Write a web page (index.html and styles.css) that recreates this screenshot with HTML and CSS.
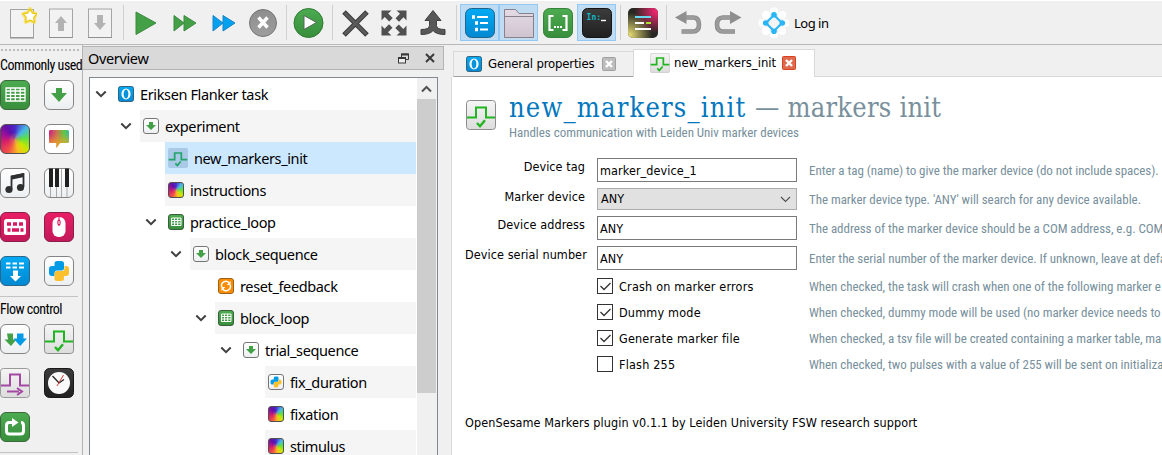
FILE: index.html
```html
<!DOCTYPE html>
<html lang="en">
<head>
<meta charset="utf-8">
<title>OpenSesame</title>
<link rel="stylesheet" href="styles.css">
</head>
<body>
<svg class="defs" width="0" height="0" aria-hidden="true">
  <defs>
    <linearGradient id="gGreen" x1="0" y1="0" x2="0" y2="1"><stop offset="0" stop-color="#4cab50"/><stop offset="1" stop-color="#388e3c"/></linearGradient>
    <linearGradient id="gBlue" x1="0" y1="0" x2="0" y2="1"><stop offset="0" stop-color="#03a9f4"/><stop offset="1" stop-color="#0288d1"/></linearGradient>
    <linearGradient id="gWhite" x1="0" y1="0" x2="0" y2="1"><stop offset="0" stop-color="#ffffff"/><stop offset="1" stop-color="#eceff1"/></linearGradient>
    <linearGradient id="gGrey" x1="0" y1="0" x2="0" y2="1"><stop offset="0" stop-color="#f5f5f5"/><stop offset="1" stop-color="#dcdcdc"/></linearGradient>
    <linearGradient id="gPink" x1="0" y1="0" x2="0" y2="1"><stop offset="0" stop-color="#e91e63"/><stop offset="1" stop-color="#c2185b"/></linearGradient>
    <linearGradient id="gDark" x1="0" y1="0" x2="0" y2="1"><stop offset="0" stop-color="#3c3c3c"/><stop offset="1" stop-color="#202020"/></linearGradient>
    <linearGradient id="gMid" x1="0" y1="0" x2="0" y2="1"><stop offset="0" stop-color="#8e8e8e"/><stop offset="1" stop-color="#9e9e9e"/></linearGradient>
    <linearGradient id="gFolder" x1="0" y1="0" x2="0" y2="1"><stop offset="0" stop-color="#e4dbe5"/><stop offset="1" stop-color="#cfc3d0"/></linearGradient>
    <radialGradient id="gRose" cx=".95" cy=".1" r=".75"><stop offset="0" stop-color="#f92672"/><stop offset="1" stop-color="#f92672" stop-opacity="0"/></radialGradient>
    <radialGradient id="gSand" cx=".05" cy=".9" r=".75"><stop offset="0" stop-color="#e6db74"/><stop offset="1" stop-color="#e6db74" stop-opacity="0"/></radialGradient>
  </defs>
  <symbol id="doc" viewBox="0 0 30 30"><rect x="3.5" y="1" width="23" height="28.5" fill="#f3f3f3" stroke="#a5a5a5"/><path d="M3 29.7h24" stroke="#8c8c8c"/></symbol>
  <symbol id="loop" viewBox="0 0 30 30"><rect x=".5" y=".5" width="29" height="29" rx="5.5" fill="url(#gGreen)" stroke="#3a6a3c"/><path d="M6 8h19v13H6zM6 11h19M6 14.3h19M6 17.6h19M10.5 8v13M15.3 8v13M20.2 8v13" fill="none" stroke="#fff" stroke-width="1.3"/></symbol>
  <symbol id="loopS" viewBox="0 0 16 16"><rect x=".5" y=".5" width="15" height="15" rx="2.5" fill="url(#gGreen)" stroke="#3a5f3c"/><path d="M3.5 4h9.500v7.500H3.500zM3.500 6.500h9.500M3.500 9h9.500M6.500 4v7.500M9.700 4v7.500" fill="none" stroke="#fff" stroke-width="1"/></symbol>
  <symbol id="seq" viewBox="0 0 30 30"><rect x=".5" y=".5" width="29" height="29" rx="5.5" fill="url(#gWhite)" stroke="#858585"/><path d="M12 8h6v5h5l-8 9-8-9h5z" fill="#43a047"/></symbol>
  <symbol id="seqS" viewBox="0 0 16 16"><rect x=".5" y=".5" width="15" height="15" rx="2.500" fill="url(#gWhite)" stroke="#757575"/><path d="M6 4h4v3h3l-5 5-5-5h3z" fill="#43a047"/></symbol>
  <symbol id="markers" viewBox="0 0 30 30"><rect x=".5" y=".5" width="29" height="29" rx="3" fill="url(#gGrey)" stroke="#8d8d8d"/><path d="M1 17.500h9V7.500h10v10h9" fill="none" stroke="#21b521" stroke-width="2"/><path d="M11 23l3 3.200 5-6" fill="none" stroke="#21b521" stroke-width="2.400"/></symbol>
  <symbol id="markersTab" viewBox="0 0 30 30"><rect x=".5" y=".5" width="29" height="29" rx="3" fill="url(#gGrey)" stroke="#c4c4c4"/><path d="M1 17.500h9V7.500h10v10h9M11 23l3 3.200 5-6" fill="none" stroke="#21b521" stroke-width="2.600"/></symbol>
  <symbol id="markersSel" viewBox="0 0 30 30"><rect width="30" height="30" rx="3" fill="#a9c9e6"/><path d="M1 17.500h9V7.500h10v10h9M11 23l3 3.200 5-6" fill="none" stroke="#21a56a" stroke-width="2.600"/></symbol>
  <symbol id="pulse" viewBox="0 0 30 30"><rect x=".5" y=".5" width="29" height="29" rx="3" fill="url(#gGrey)" stroke="#9a9a9a"/><path d="M1 17.500h9V6.500h10v11h9" fill="none" stroke="#a349a4" stroke-width="2"/><path d="M7 23.500h12M17 20l5 3.500-5 3.500" fill="none" stroke="#a349a4" stroke-width="2"/></symbol>
  <symbol id="python" viewBox="0 0 30 30"><rect x=".5" y=".5" width="29" height="29" rx="5.500" fill="url(#gWhite)" stroke="#858585"/><path d="M10.500 9V7.500Q10.500 5 13 5h4q3 0 3 2.500V12q0 2.500-2.500 2.500H13q-2.500 0-2.500 3V20H8q-3 0-3-3v-4q0-3 3-3h2.500z" fill="#039be5"/><path d="M20.500 10H22q3 0 3 3v4q0 3-3 3h-2v2.500q0 2.500-3 2.500h-4q-2.500 0-2.500-2.500v-5q0-2.500 2.500-2.500h5q2.500 0 2.500-2.500z" fill="#fbc02d"/></symbol>
  <symbol id="pythonS" viewBox="0 0 16 16"><rect x=".5" y=".5" width="15" height="15" rx="2.500" fill="url(#gWhite)" stroke="#757575"/><g transform="translate(.5 .5) scale(.5)"><path d="M10.500 9V7.500Q10.500 4 13 4h4q3 0 3 2.500V12q0 2.500-2.500 2.500H13q-2.500 0-2.500 3V20H8q-4 0-4-3v-4q0-3 4-3h2.500z" fill="#039be5"/><path d="M20.500 10H22q4 0 4 3v4q0 3-4 3h-2v2.500q0 3.500-3 3.500h-4q-2.500 0-2.500-3.500v-5q0-2.500 2.500-2.500h5q2.500 0 2.500-2.500z" fill="#fbc02d"/></g></symbol>
  <symbol id="general" viewBox="0 0 16 16"><rect x=".5" y=".5" width="15" height="15" rx="2" fill="url(#gBlue)" stroke="#31637e"/><ellipse cx="8" cy="8" rx="3.500" ry="4.500" fill="none" stroke="#fff" stroke-width="2.200"/><ellipse cx="8" cy="8" rx="2" ry="4.600" fill="#0593dc"/></symbol>
  <symbol id="reset" viewBox="0 0 16 16"><rect x=".5" y=".5" width="15" height="15" rx="2.500" fill="#fb8c00" stroke="#9b6017"/><path d="M3.800 9a4.300 4.300 0 0 1 7.300-4.200M12.200 7a4.300 4.300 0 0 1-7.300 4.200" fill="none" stroke="#fff" stroke-width="1.500"/><path d="M12.500 3v4H8.700zM3.500 13V9h3.800z" fill="#fff"/></symbol>
  <symbol id="arrow" viewBox="0 0 12 8"><path d="M1.300 1.500L6 6.200l4.700-4.700" fill="none" stroke="#404040" stroke-width="2"/></symbol>
</svg>

<header class="toolbar">
  <span class="tool"><svg width="30" height="36" viewBox="0 0 30 36"><rect x="3.500" y="4.500" width="23" height="28" fill="#f3f3f3" stroke="#a3a3a3"/><path d="M3 33h24" stroke="#8e8e8e"/><path d="M23 4l2.400 4 4.400.9-3 3.500.4 4.600-4.200-1.800-4.200 1.800.4-4.600-3-3.500 4.400-.9z" fill="#fff" stroke="#f7e04a" stroke-width="4" stroke-linejoin="round" opacity=".7"/><path d="M23 4l2.400 4 4.400.9-3 3.500.4 4.600-4.200-1.800-4.200 1.800.4-4.600-3-3.500 4.400-.9z" fill="#fff" stroke="#ecc90f" stroke-width="1.300" stroke-linejoin="round"/></svg></span>
  <span class="tool"><svg width="30" height="30"><use href="#doc"/><path d="M12 23v-8H9l6-7 6 7h-3v8z" fill="#b3b3b3"/></svg></span>
  <span class="tool"><svg width="30" height="30"><use href="#doc"/><path d="M12 7v8H9l6 7 6-7h-3V7z" fill="#b3b3b3"/></svg></span>
  <i class="sep"></i>
  <span class="tool"><svg width="30" height="30"><path d="M5 4l20 11L5 26.500z" fill="#43a047" stroke="#3b8a3f"/></svg></span>
  <span class="tool"><svg width="30" height="30"><path d="M4 7.500l10 7.500-10 8zM14 7.500L26 15 14 23z" fill="#43a047" stroke="#3b8a3f"/></svg></span>
  <span class="tool"><svg width="30" height="30"><path d="M4 7.500l10 7.500-10 8zM14 7.500L26 15 14 23z" fill="#03a0f0" stroke="#1b84c4"/></svg></span>
  <span class="tool"><svg width="30" height="30"><circle cx="15" cy="15" r="13.500" fill="url(#gMid)" stroke="#757575"/><path d="M10.500 9.500l9 10M19.500 9.500l-9 10" stroke="#fff" stroke-width="3.400"/></svg></span>
  <i class="sep"></i>
  <span class="tool"><svg width="32" height="32"><circle cx="15.500" cy="16" r="14.500" fill="url(#gGreen)" stroke="#2f7a33"/><path d="M11 8.500L23.500 15.500 11 22.500z" fill="#fff" stroke="#556658"/></svg></span>
  <i class="sep"></i>
  <span class="tool"><svg width="30" height="30"><path d="M4 4l23 23M27 4L4 27" stroke="#3c3c3c" stroke-width="5"/><path d="M4.700 4.700l21.600 21.600M26.300 4.700L4.700 26.300" stroke="#5b5b5b" stroke-width="3"/></svg></span>
  <span class="tool"><svg width="30" height="30" fill="#505050"><path d="M2.500 2.500h10l-3.300 3 4.500 4.500-3.500 3.500L5.700 9l-3.200 3.500zM27.500 2.500v10l-3-3.300-4.500 4.500-3.500-3.500L21 5.700l-3.500-3.200zM2.500 27.500v-10l3 3.300 4.500-4.500 3.500 3.500L9 24.300l3.500 3.200zM27.500 27.500h-10l3.300-3-4.500-4.500 3.500-3.500 4.500 4.500 3.200-3.500z"/></svg></span>
  <span class="tool"><svg width="30" height="30"><path d="M15 2.500l8 10h-4.500v5q0 4 8.500 4v5q-9 0-12-4-3 4-12 4v-5q8.500 0 8.500-4v-5H7z" fill="#585858" stroke="#404040"/></svg></span>
  <i class="sep sep-wide"></i>
  <span class="tool on"><svg width="30" height="30"><rect x=".5" y=".5" width="29" height="29" rx="6" fill="url(#gBlue)" stroke="#20648c"/><path d="M12 9h11M15 15h8M15 21.500h8" stroke="#fff" stroke-width="2"/><path d="M7 9h3M10 15h3M10 21.500h3" stroke="#fff" stroke-width="3.400"/></svg></span>
  <span class="tool on"><svg width="30" height="30"><path d="M.5 1.500h11l3.500 4h14.500v24H.5z" fill="url(#gFolder)" stroke="#88808a"/><path d="M.5 8.500h29" stroke="#88808a"/></svg></span>
  <span class="tool"><svg width="30" height="30"><rect x=".5" y=".5" width="29" height="29" rx="6" fill="url(#gGreen)" stroke="#35823a"/><path d="M10.500 8h-4v14h4M19.500 8h4v14h-4" fill="none" stroke="#fff" stroke-width="2.200"/><path d="M11 19h2M14 19h2M17 19h2" stroke="#fff" stroke-width="2"/></svg></span>
  <span class="tool on"><svg width="30" height="30"><rect x=".5" y=".5" width="29" height="29" rx="5" fill="url(#gDark)" stroke="#151515"/><text class="prompt" x="4.500" y="12">In:</text><path d="M19 12.500h5" stroke="#fff" stroke-width="1.400"/></svg></span>
  <i class="sep"></i>
  <span class="tool"><svg width="30" height="30"><rect width="30" height="30" rx="5" fill="#272822"/><rect width="30" height="30" rx="5" fill="url(#gRose)"/><rect width="30" height="30" rx="5" fill="url(#gSand)"/><path d="M7 9h16" stroke="#66d9ef" stroke-width="2"/><path d="M7 15h9M7 21h16" stroke="#fff" stroke-width="2"/><path d="M18 15h5" stroke="#a6e22e" stroke-width="2"/></svg></span>
  <i class="sep"></i>
  <span class="tool"><svg width="30" height="30"><path d="M12 9.500h7q6 0 6 7t-6 7H7.500" fill="none" stroke="#888" stroke-width="4.600"/><path d="M12 9.500h7q6 0 6 7t-6 7H8" fill="none" stroke="#9b9b9b" stroke-width="3"/><path d="M1 9.500L12.500 3v13z" fill="#8f8f8f"/></svg></span>
  <span class="tool"><svg width="30" height="30"><path d="M17 9.500h-7q-6 0-6 7t6 7h12" fill="none" stroke="#888" stroke-width="4.600"/><path d="M17 9.500h-7q-6 0-6 7t6 7h11.500" fill="none" stroke="#9b9b9b" stroke-width="3"/><path d="M28.500 9.500L17 3v13z" fill="#8f8f8f"/></svg></span>
  <span class="login"><svg width="32" height="32"><g fill="#fff"><circle cx="16" cy="4.500" r="4"/><circle cx="16" cy="27.500" r="4"/><circle cx="4.500" cy="16" r="4"/><circle cx="27.500" cy="16" r="4"/><circle cx="8" cy="8" r="4"/><circle cx="24" cy="8" r="4"/><circle cx="8" cy="24" r="4"/><circle cx="24" cy="24" r="4"/></g><path d="M16 8l8 8-8 8-8-8z" fill="#f4f4f4" stroke="#29b6f6" stroke-width="2"/><g fill="#29b6f6"><circle cx="16" cy="7.700" r="2.800"/><circle cx="16" cy="24.300" r="2.800"/><circle cx="7.700" cy="16" r="2.800"/><circle cx="24.300" cy="16" r="2.800"/></g></svg><span>Log in</span></span>
</header>

<main class="workspace">
  <aside class="items">
    <div class="grip"></div>
    <h2 class="group">Commonly used</h2>
    <div class="palette">
      <svg><use href="#loop"/></svg>
      <svg><use href="#seq"/></svg>
      <span class="rainbow"></span>
      <span class="tile"><span class="bubble"></span></span>
      <svg viewBox="0 0 30 30"><rect x=".5" y=".5" width="29" height="29" rx="5.500" fill="url(#gWhite)" stroke="#858585"/><path d="M11.500 21V8.500l12-2.500v13" fill="none" stroke="#303030" stroke-width="1.800"/><path d="M11 7.800l13-2.800v4l-13 2.700z" fill="#303030"/><circle cx="9" cy="21.500" r="3.600" fill="#303030"/><circle cx="20.500" cy="19.500" r="3.600" fill="#303030"/></svg>
      <svg viewBox="0 0 30 30"><rect x=".5" y=".5" width="29" height="29" rx="5.500" fill="url(#gWhite)" stroke="#858585"/><path d="M6.500 18v11M12.500 18v11M17.500 1v28M23 18v11" stroke="#aaa"/><path d="M5 .5h4V19H5zM11 .5h4V19h-4zM21 .5h4V19h-4z" fill="#202020"/></svg>
      <svg viewBox="0 0 30 30"><rect x=".5" y=".5" width="29" height="29" rx="5.500" fill="url(#gPink)" stroke="#8c1f48"/><rect x="4" y="7" width="22" height="16" rx="2.500" fill="#fff"/><path d="M7 12h4M13 12h4M19 12h4M7.500 18h3M12 18h7M20.500 18h3" stroke="#d81b60" stroke-width="3.500"/></svg>
      <svg viewBox="0 0 30 30"><rect x=".5" y=".5" width="29" height="29" rx="5.500" fill="url(#gPink)" stroke="#8c1f48"/><rect x="8.500" y="5" width="13" height="20" rx="6" fill="#fff"/><path d="M15 5v9" stroke="#d81b60"/><ellipse cx="15" cy="10.500" rx="1.700" ry="3" fill="#d81b60"/><path d="M15 9v3" stroke="#fff"/></svg>
      <svg viewBox="0 0 30 30"><rect x=".5" y=".5" width="29" height="29" rx="5.500" fill="url(#gBlue)" stroke="#2c6688"/><path d="M6 7.500H10.500M12.500 7.500H17M19 7.500H24M6 11.500H10.500M12.500 11.500H17M19 11.500H24" stroke="#fff" stroke-width="2"/><path d="M13 14.500h5V20h3l-5.500 5.500L10 20h3z" fill="#fff"/></svg>
      <svg><use href="#python"/></svg>
    </div>
    <div class="rule"></div>
    <h2 class="group">Flow control</h2>
    <div class="palette">
      <svg viewBox="0 0 30 30"><rect x=".5" y=".5" width="29" height="29" rx="5.500" fill="url(#gWhite)" stroke="#858585"/><path d="M7 9.500h6v6h3.500L11 22l-6.500-6.500H8z" fill="#43a047"/><path d="M17 9.500h6.500v5H27l-6.800 7.500-6.800-7.500H17z" fill="#039be5"/></svg>
      <svg><use href="#markers"/></svg>
      <svg><use href="#pulse"/></svg>
      <svg viewBox="0 0 30 30"><rect x=".5" y=".5" width="29" height="29" rx="5" fill="url(#gDark)" stroke="#181818"/><circle cx="15" cy="15" r="11" fill="#fafafa"/><path d="M8.500 8l6.500 7 5-3.500" fill="none" stroke="#222" stroke-width="1.300"/><path d="M13 18l6.500-11" stroke="#e53935"/></svg>
      <svg viewBox="0 0 30 30"><rect x=".5" y=".5" width="29" height="29" rx="5.500" fill="url(#gGreen)" stroke="#3a6a3c"/><path d="M9 10.500q-2.500 0-2.500 3V19q0 3 3 3h11q3 0 3-3v-5.500q0-3-2.500-3M9 10.500h4" fill="none" stroke="#fff" stroke-width="3"/><path d="M12 6l6.500 4.500L12 15z" fill="#fff"/></svg>
    </div>
    <div class="rule rule-last"></div>
  </aside>

  <section class="dock">
    <div class="dock-title"><span class="dock-name">Overview</span>
      <svg width="11" height="11"><path d="M3.500 4.500V1h7v5.500H8" fill="none" stroke="#383838"/><path d="M3 1.500h8" stroke="#383838" stroke-width="2"/><rect x=".5" y="4.500" width="7" height="5.500" fill="#eee" stroke="#383838"/><path d="M0 5h8" stroke="#383838" stroke-width="2"/></svg>
      <svg width="10" height="10"><path d="M1 1l8 8M9 1L1 9" stroke="#383838" stroke-width="2"/></svg>
    </div>
    <div class="tree">
      <div class="rows">
        <div class="row d0"><svg class="chev"><use href="#arrow"/></svg><div class="cell"><svg class="ic"><use href="#general"/></svg><span>Eriksen Flanker task</span></div></div>
        <div class="row d1 alt"><svg class="chev"><use href="#arrow"/></svg><div class="cell"><svg class="ic"><use href="#seqS"/></svg><span>experiment</span></div></div>
        <div class="row d2 sel"><div class="cell"><svg class="ic ic-lg"><use href="#markersSel"/></svg><span>new_markers_init</span></div></div>
        <div class="row d2 alt"><div class="cell"><span class="ic rainbow"></span><span>instructions</span></div></div>
        <div class="row d2"><svg class="chev"><use href="#arrow"/></svg><div class="cell"><svg class="ic"><use href="#loopS"/></svg><span>practice_loop</span></div></div>
        <div class="row d3 alt"><svg class="chev"><use href="#arrow"/></svg><div class="cell"><svg class="ic"><use href="#seqS"/></svg><span>block_sequence</span></div></div>
        <div class="row d4"><div class="cell"><svg class="ic"><use href="#reset"/></svg><span>reset_feedback</span></div></div>
        <div class="row d4 alt"><svg class="chev"><use href="#arrow"/></svg><div class="cell"><svg class="ic"><use href="#loopS"/></svg><span>block_loop</span></div></div>
        <div class="row d5"><svg class="chev"><use href="#arrow"/></svg><div class="cell"><svg class="ic"><use href="#seqS"/></svg><span>trial_sequence</span></div></div>
        <div class="row d6 alt"><div class="cell"><svg class="ic"><use href="#pythonS"/></svg><span>fix_duration</span></div></div>
        <div class="row d6"><div class="cell"><span class="ic rainbow"></span><span>fixation</span></div></div>
        <div class="row d6 alt"><div class="cell"><span class="ic rainbow"></span><span>stimulus</span></div></div>
      </div>
      <div class="scroll"><div class="scroll-up"><svg width="11" height="8"><path d="M1 6.500l4.500-4.500L10 6.500" fill="none" stroke="#505050" stroke-width="2"/></svg></div><div class="thumb"></div></div>
    </div>
  </section>

  <section class="editor">
    <div class="tabs">
      <div class="tab"><svg class="ic"><use href="#general"/></svg><span class="tab-general">General properties</span><svg class="close" viewBox="0 0 14 14"><rect x=".5" y=".5" width="13" height="13" rx="1" fill="#bdbdbd" stroke="#a0a0a0"/><path d="M4 4l6 6M10 4l-6 6" stroke="#fff" stroke-width="2.400"/></svg></div>
      <div class="tab active"><svg class="ic ic-lg"><use href="#markersTab"/></svg><span class="tab-item">new_markers_init</span><svg class="close" viewBox="0 0 14 14"><rect x=".5" y=".5" width="13" height="13" rx="1" fill="#dc6b50" stroke="#dc3f20"/><path d="M4 4l6 6M10 4l-6 6" stroke="#fff" stroke-width="2.400"/></svg></div>
      <div class="tab-rest"></div>
    </div>
    <div class="page">
      <div class="heading">
        <svg width="30" height="30"><use href="#markers"/></svg>
        <div class="heading-text">
          <h1><span class="name">new_markers_init</span> <span class="kind">— markers init</span></h1>
          <p class="subtitle">Handles communication with Leiden Univ marker devices</p>
        </div>
      </div>
      <div class="form">
        <label>Device tag</label><div class="field">marker_device_1</div><p class="hint">Enter a tag (name) to give the marker device (do not include spaces).</p>
        <label>Marker device</label><div class="field select">ANY<svg width="11" height="7"><path d="M1 1l4.500 4.500L10 1" fill="none" stroke="#505050" stroke-width="1.100"/></svg></div><p class="hint">The marker device type. 'ANY' will search for any device available.</p>
        <label>Device address</label><div class="field">ANY</div><p class="hint">The address of the marker device should be a COM address, e.g. COM</p>
        <label>Device serial number</label><div class="field">ANY</div><p class="hint">Enter the serial number of the marker device. If unknown, leave at defa</p>
      </div>
      <div class="checks">
        <div class="check"><svg class="box"><path d="M2.500 7l3.500 3.500L12.500 4"/></svg><span>Crash on marker errors</span></div><p class="hint">When checked, the task will crash when one of the following marker e</p>
        <div class="check"><svg class="box"><path d="M2.500 7l3.500 3.500L12.500 4"/></svg><span>Dummy mode</span></div><p class="hint">When checked, dummy mode will be used (no marker device needs to</p>
        <div class="check"><svg class="box"><path d="M2.500 7l3.500 3.500L12.500 4"/></svg><span>Generate marker file</span></div><p class="hint">When checked, a tsv file will be created containing a marker table, ma</p>
        <div class="check"><svg class="box"></svg><span>Flash 255</span></div><p class="hint">When checked, two pulses with a value of 255 will be sent on initializa</p>
      </div>
      <p class="credit">OpenSesame Markers plugin v0.1.1 by Leiden University FSW research support</p>
    </div>
  </section>
</main>
</body>
</html>
```
FILE: styles.css
```css
* { box-sizing: border-box; }
html, body { margin: 0; height: 455px; overflow: hidden; }
body {
  display: flex; flex-direction: column;
  background: #f0f0f0; color: #000;
  font: 12.500px/16px "DejaVu Sans Condensed", "DejaVu Sans", sans-serif;
  font-stretch: condensed;
  letter-spacing: .09px;
}
h1, h2, p { margin: 0; font-weight: 400; }
svg { display: block; flex: none; }
.defs { position: absolute; }

.toolbar {
  display: flex; align-items: center; flex: none;
  height: 45px; padding: 1px 0 1px 2px;
  border-top: 1px solid #fff; border-bottom: 1px solid #b8b8b8;
}
.tool { display: grid; place-items: center; flex: none; width: 39px; height: 37px; }
.tool.on { background: #c0dcf3; border: 1px solid #90c8f6; }
.sep { flex: none; width: 7px; height: 35px; background: linear-gradient(#d0d0d0, #d0d0d0) 4px 0 / 1px 100% no-repeat; }
.sep-wide { width: 8px; }
.login { display: flex; align-items: center; gap: 4px; margin-left: 11px; font: 13px "Noto Sans", sans-serif; letter-spacing: -.5px; }
.prompt { font: bold 8px "DejaVu Sans Mono", monospace; fill: #16b5c8; }

.workspace { display: flex; flex: 1; min-height: 0; }

.items { flex: none; width: 83px; padding-top: 3px; border-right: 1px solid #b4b4b4; overflow: hidden; }
.grip { height: 4px; width: 81px; background: radial-gradient(circle, #bbb 1px, transparent 1.200px) 0 0 / 4px 4px; }
.group { height: 28px; padding-top: 5px; font: 14px/17px Roboto, sans-serif; font-stretch: 75%; letter-spacing: -.5px; white-space: nowrap; }
.palette { display: grid; grid-template-columns: 30px 30px; gap: 14px; }
.palette svg, .palette .rainbow, .tile { width: 30px; height: 30px; }
.rainbow {
  border: 1px solid #505050; border-radius: 6px;
  background:
    radial-gradient(circle at 50% 50%, #c88070aa, #c8807000 35%),
    conic-gradient(#4828c8, #48b8e8 45deg, #58e048 85deg, #c8e800 130deg, #f8c020 165deg, #f05048 210deg, #d82068 255deg, #a01098 290deg, #6010a8 325deg, #4828c8);
}
.tile { display: grid; place-items: center; border: 1px solid #858585; border-radius: 6px; background: #fff; }
.bubble {
  width: 20px; height: 18px;
  background: linear-gradient(transparent 20%, #f0a820cc 80%), linear-gradient(90deg, #d02080, #c87850 40%, #60c840 75%, #40b8a0);
  clip-path: polygon(0 6%, 5% 0, 95% 0, 100% 6%, 100% 66%, 95% 72%, 55% 72%, 37% 100%, 37% 72%, 5% 72%, 0 66%);
}
.rule { width: 78px; height: 1px; margin: 10px 0 0; background: #c4c4c4; }
.rule + .group { height: 27px; padding-top: 4px; }

.dock { flex: none; width: 361px; padding-top: 1px; }
.dock-title { display: flex; align-items: center; height: 24px; padding: 0 8px 0 5px; border: 1px solid #b4b4b4; border-left: 0; background: #d9d9d9; }
.dock-name { flex: 1; font: 14.500px "Noto Sans", sans-serif; letter-spacing: -.35px; }
.dock-title svg + svg { margin-left: 16px; }
.tree { display: flex; width: 349px; height: 390px; margin: 7px 0 0 6px; border: 1px solid #828790; background: #fff; }
.rows { width: 326px; }
.row { display: flex; align-items: center; height: 32px; }
.chev { width: 12px; height: 8px; margin: 0 8px 0 -20px; }
.cell { display: flex; align-items: center; flex: 1; height: 32px; padding-left: 3px; font: 14.500px "Noto Sans", sans-serif; letter-spacing: -.37px; }
.alt .cell { background: #f5f5f5; }
.sel .cell { background: #cce8ff; }
.d0 { padding-left: 25px; }
.d1 { padding-left: 50px; }
.d2 { padding-left: 75px; }
.d3 { padding-left: 100px; }
.d4 { padding-left: 125px; }
.d5 { padding-left: 150px; }
.d6 { padding-left: 175px; }
.ic { flex: none; width: 16px; height: 16px; margin-right: 6px; }
.ic.rainbow { border-radius: 3px; }
.ic-lg { width: 20px; height: 20px; }
.scroll { flex: none; width: 20px; margin-left: 1px; padding-right: 1px; background: #f0f0f0; }
.scroll-up { display: grid; place-items: center; height: 21px; }
.thumb { height: 294px; background: #cdcdcd; }

.editor { display: flex; flex-direction: column; flex: 1; min-width: 0; padding: 4px 0 0 7px; }
.tabs { display: flex; align-items: flex-end; flex: none; height: 28px; padding-left: 2px; }
.tab { display: flex; align-items: center; flex: none; width: 180px; height: 26px; padding: 0 0 0 12px; border: 1px solid #d9d9d9; border-right: 0; border-bottom-color: #a0a0a0; font-size: 13px; letter-spacing: 0; white-space: nowrap; }
.tab-general { letter-spacing: -.17px; }
.tab.active { width: 182px; height: 28px; padding: 0 0 2px 16px; border: 1px solid #d9d9d9; border-bottom: 0; background: #fff; }
.tab .ic-lg { margin-right: 4px; }
.close { width: 14px; height: 14px; margin-left: 8px; }
.tab.active .close { margin-left: 6px; }
.tab-rest { flex: 1; height: 1px; background: #d9d9d9; }
.page { flex: 1; min-height: 0; padding: 14px 0 0 13px; border-left: 1px solid #d9d9d9; background: #fff; overflow: hidden; }

.heading { display: flex; height: 66px; padding-left: 1px; }
.heading > svg { margin-top: 9px; }
.heading-text { padding-left: 13px; white-space: nowrap; }
h1 { font: 27px/34px "DejaVu Serif Condensed", "DejaVu Serif", serif; font-stretch: condensed; letter-spacing: .7px; }
.name { color: #0277bd; letter-spacing: 1.200px; }
.kind { color: #78909c; letter-spacing: .25px; }
.subtitle { color: #78909c; font: 13px/16px Roboto, sans-serif; font-stretch: 75%; letter-spacing: -.04px; }
.form { display: grid; grid-template-columns: 120px 200px 1fr; grid-template-rows: 24px 22px 24px 24px; column-gap: 12px; row-gap: 6px; margin-top: 1px; }
.form label { padding-top: 1px; text-align: right; white-space: nowrap; }
.field { display: flex; align-items: center; padding: 1px 0 0 2px; border: 1px solid #7a7a7a; background: #fff; }
.select { justify-content: space-between; padding: 0 5px 0 3px; border-color: #adadad; background: #e1e1e1; }
.hint { align-self: center; padding-top: 1px; color: #78909c; font: 13px/16px Roboto, sans-serif; font-stretch: 75%; letter-spacing: -.05px; white-space: nowrap; }
.checks { display: grid; grid-template-columns: 200px 1fr; grid-auto-rows: 26px; column-gap: 12px; margin: 3px 0 0 132px; }
.check { display: flex; align-items: center; gap: 6px; }
.check span { padding-top: 1px; letter-spacing: .2px; }
.box { width: 16px; height: 16px; border: 1px solid #333; background: #fff; fill: none; stroke: #333; stroke-width: 1.300; }
.credit { margin-top: 38px; white-space: nowrap; }
```
